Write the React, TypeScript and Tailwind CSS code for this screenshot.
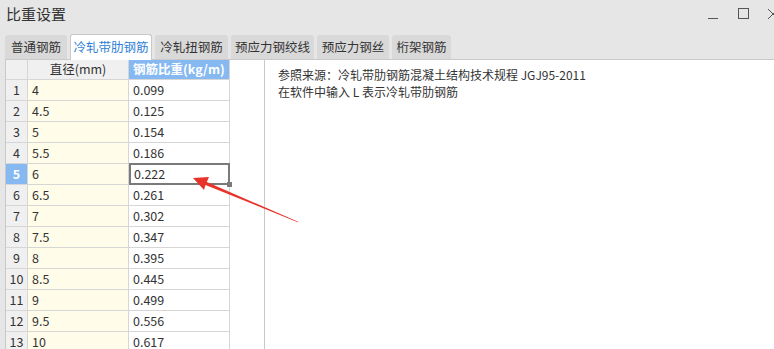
import React from "react";

const rows: [string, string][] = [
  ["4", "0.099"],
  ["4.5", "0.125"],
  ["5", "0.154"],
  ["5.5", "0.186"],
  ["6", "0.222"],
  ["6.5", "0.261"],
  ["7", "0.302"],
  ["7.5", "0.347"],
  ["8", "0.395"],
  ["8.5", "0.445"],
  ["9", "0.499"],
  ["9.5", "0.556"],
  ["10", "0.617"],
];

const tabs: { label: string; w: string; active?: boolean }[] = [
  { label: "普通钢筋", w: "w-[62px]" },
  { label: "冷轧带肋钢筋", w: "w-[82px]", active: true },
  { label: "冷轧扭钢筋", w: "w-[73px]" },
  { label: "预应力钢绞线", w: "w-[83px]" },
  { label: "预应力钢丝", w: "w-[72px]" },
  { label: "桁架钢筋", w: "w-[59px]" },
];

export default function App() {
  return (
    <div
      className="relative w-[774px] h-[349px] overflow-hidden bg-[#e6e6e6] text-[#333]"
      style={{ fontFamily: '"Microsoft YaHei", "Noto Sans CJK SC", "Noto Sans", sans-serif' }}
    >
      {/* title bar */}
      <div className="h-[31px] flex items-center pl-[6px] pr-0">
        <span className="text-[15px] leading-none pb-[5px]">比重设置</span>
        <div className="ml-auto flex items-center h-full pb-[4px]">
          <svg width="12" height="12" viewBox="0 0 12 12" className="mr-[18px]">
            <line x1="0" y1="10.5" x2="10" y2="10.5" stroke="#555" strokeWidth="1" />
          </svg>
          <svg width="12" height="12" viewBox="0 0 12 12" className="mr-[18px]">
            <rect x="0.5" y="0.5" width="10" height="10" fill="none" stroke="#555" strokeWidth="1" />
          </svg>
          <svg width="6" height="12" viewBox="0 0 6 12">
            <line x1="0" y1="1" x2="10" y2="11" stroke="#555" strokeWidth="1" />
            <line x1="0" y1="11" x2="10" y2="1" stroke="#555" strokeWidth="1" />
          </svg>
        </div>
      </div>

      {/* tabs */}
      <div className="flex items-end h-[27px] pl-[5px] gap-[3px] mt-[1px]">
        {tabs.map((t) => (
          <div
            key={t.label}
            className={
              t.active
                ? `${t.w} h-[26px] flex items-center justify-center bg-white border border-b-0 border-[#c9c9c9] rounded-t-[3px] text-[12.5px] text-[#2f7fd6] relative top-[1px] z-10`
                : `${t.w} h-[24px] flex items-center justify-center bg-[#d9d9d9] rounded-t-[3px] text-[12.5px] text-[#333]`
            }
          >
            {t.label}
          </div>
        ))}
      </div>

      {/* content */}
      <div className="flex h-[291px] ml-[5px] bg-white border-t border-[#c9c9c9]">
        <div className="flex flex-col w-[225px] border-l border-[#c9c9c9] text-[12.5px]">
          {/* header */}
          <div className="flex h-[20px] shrink-0">
            <div className="w-[22px] bg-[#f0f0f0] border-r border-b border-[#d6d6d6]" />
            <div className="w-[101px] bg-[#f0f0f0] border-r border-b border-[#d6d6d6] flex items-center justify-center">
              直径(mm)
            </div>
            <div className="w-[101px] bg-[#86b9f2] border-r border-b border-[#d6d6d6] flex items-center pl-[4px] text-white font-bold">
              钢筋比重(kg/m)
            </div>
          </div>
          {rows.map(([d, w], i) => {
            const sel = i === 4;
            return (
              <div key={i} className="flex h-[21px] shrink-0">
                <div
                  className={
                    sel
                      ? "w-[22px] bg-[#86b9f2] text-white font-bold border-r border-b border-[#d6d6d6] flex items-center justify-center"
                      : "w-[22px] bg-[#f0f0f0] border-r border-b border-[#d6d6d6] flex items-center justify-center"
                  }
                >
                  {i + 1}
                </div>
                <div className="w-[101px] bg-[#fffcea] border-r border-b border-[#d6d6d6] flex items-center pl-[4px]">
                  {d}
                </div>
                <div
                  className={
                    sel
                      ? "relative w-[101px] border-2 border-[#7a7a7a] flex items-center pl-[3px] -mt-[1px] h-[22px]"
                      : "w-[101px] border-r border-b border-[#d6d6d6] flex items-center pl-[4px]"
                  }
                >
                  {w}
                  {sel && (
                    <div className="absolute -right-[4px] -bottom-[4px] w-[5px] h-[5px] bg-[#7a7a7a]" />
                  )}
                </div>
              </div>
            );
          })}
        </div>
        <div className="w-[35px] border-r border-[#c9c9c9]" />
        <div className="pl-[13px] pt-[6px] text-[12px] leading-[17px] text-[#333]">
          <div>参照来源：冷轧带肋钢筋混凝土结构技术规程 JGJ95-2011</div>
          <div>在软件中输入 L 表示冷轧带肋钢筋</div>
        </div>
      </div>

      {/* red arrow annotation */}
      <svg className="absolute left-0 top-0 pointer-events-none" width="774" height="349">
        <polygon
          points="193,178 209,177 206.8,182 298.2,221.8 297.8,222.2 205.5,185 204,190"
          fill="#e8332b"
        />
      </svg>
    </div>
  );
}
